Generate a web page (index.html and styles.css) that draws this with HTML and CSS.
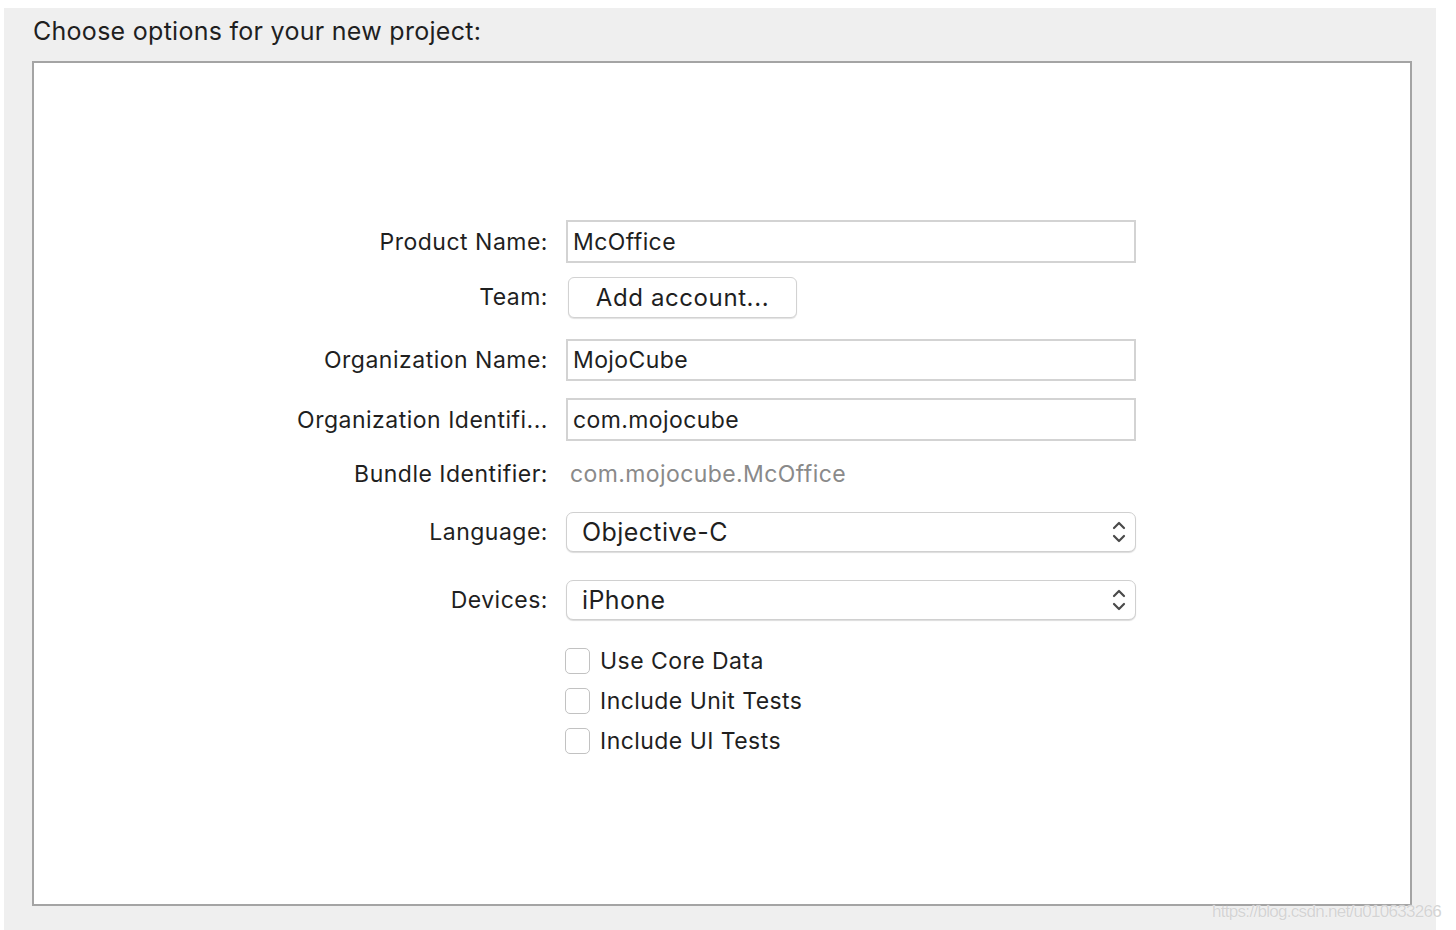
FILE: index.html
```html
<!DOCTYPE html>
<html>
<head>
<meta charset="utf-8">
<link rel="stylesheet" href="styles.css">
</head>
<body>
<div class="panel">
  <div class="title">Choose options for your new project:</div>
  <div class="box">
    <div class="form">
      <div class="row r1">
        <div class="label">Product Name:</div>
        <div class="field">McOffice</div>
      </div>
      <div class="row r2">
        <div class="label">Team:</div>
        <div class="button">Add account...</div>
      </div>
      <div class="row r3">
        <div class="label">Organization Name:</div>
        <div class="field">MojoCube</div>
      </div>
      <div class="row r4">
        <div class="label">Organization Identifi...</div>
        <div class="field">com.mojocube</div>
      </div>
      <div class="row r5">
        <div class="label">Bundle Identifier:</div>
        <div class="static">com.mojocube.McOffice</div>
      </div>
      <div class="row r6">
        <div class="label">Language:</div>
        <div class="popup"><span>Objective-C</span>
          <svg class="chev" width="16" height="26" viewBox="0 0 16 26"><path d="M3 9 L8 4 L13 9" fill="none" stroke="#4a4a4a" stroke-width="2.2" stroke-linecap="round" stroke-linejoin="round"/><path d="M3 17 L8 22 L13 17" fill="none" stroke="#4a4a4a" stroke-width="2.2" stroke-linecap="round" stroke-linejoin="round"/></svg>
        </div>
      </div>
      <div class="row r7">
        <div class="label">Devices:</div>
        <div class="popup"><span>iPhone</span>
          <svg class="chev" width="16" height="26" viewBox="0 0 16 26"><path d="M3 9 L8 4 L13 9" fill="none" stroke="#4a4a4a" stroke-width="2.2" stroke-linecap="round" stroke-linejoin="round"/><path d="M3 17 L8 22 L13 17" fill="none" stroke="#4a4a4a" stroke-width="2.2" stroke-linecap="round" stroke-linejoin="round"/></svg>
        </div>
      </div>
      <div class="row check r8">
        <div class="label"></div>
        <div class="cb"><span class="box-cb"></span><span>Use Core Data</span></div>
      </div>
      <div class="row check r9">
        <div class="label"></div>
        <div class="cb"><span class="box-cb"></span><span>Include Unit Tests</span></div>
      </div>
      <div class="row check r10">
        <div class="label"></div>
        <div class="cb"><span class="box-cb"></span><span>Include UI Tests</span></div>
      </div>
    </div>
  </div>
  <div class="watermark">https://blog.csdn.net/u010633266</div>
</div>
</body>
</html>
```

FILE: styles.css
```css
html, body {
  margin: 0;
  padding: 0;
  background: #ffffff;
}
body {
  font-family: Inter, "Liberation Sans", sans-serif;
  color: #1f1f1f;
  overflow: hidden;
}
.panel {
  position: relative;
  margin: 8px 0 0 4px;
  width: 1432px;
  height: 922px;
  background: #efefef;
  padding-top: 1px;
  box-sizing: border-box;
}
.title {
  margin: 0 0 0 29px;
  height: 52px;
  line-height: 44px;
  font-size: 25px;
  letter-spacing: 0.28px;
  color: #1f1f1f;
}
.box {
  margin-left: 28px;
  width: 1380px;
  height: 845px;
  box-sizing: border-box;
  border: 2px solid #a4a4a4;
  background: #ffffff;
  padding-top: 157px;
}
.form {
  display: flex;
  flex-direction: column;
}
.row {
  display: grid;
  grid-template-columns: 514px 570px;
  column-gap: 18px;
  align-items: center;
}
.label {
  text-align: right;
  font-size: 23px;
  letter-spacing: 0.5px;
  color: #1f1f1f;
}
.r1 { height: 43px; }
.r2 { height: 42px; margin-top: 13px; }
.r3 { height: 42px; margin-top: 21px; }
.r4 { height: 43px; margin-top: 17px; }
.r5 { height: 40px; margin-top: 13px; }
.r6 { height: 40px; margin-top: 18px; }
.r7 { height: 40px; margin-top: 28px; }
.r8 { height: 26px; margin-top: 27px; }
.r9 { height: 26px; margin-top: 14px; }
.r10 { height: 26px; margin-top: 14px; }
.field {
  height: 100%;
  box-sizing: border-box;
  border: 2px solid #d3d3d3;
  padding-left: 5px;
  display: flex;
  align-items: center;
  font-size: 23px;
  letter-spacing: 0.4px;
  color: #1f1f1f;
}
.button {
  justify-self: start;
  margin-left: 2px;
  width: 229px;
  height: 41px;
  box-sizing: border-box;
  border: 1px solid #d2d2d2;
  border-radius: 6px;
  box-shadow: 0 1px 1px rgba(0,0,0,0.12);
  display: flex;
  align-items: center;
  justify-content: center;
  font-size: 24px;
  letter-spacing: 0.6px;
  color: #1f1f1f;
  background: #fff;
}
.static {
  padding-left: 4px;
  font-size: 23px;
  letter-spacing: 0.4px;
  color: #8a8a8a;
}
.popup {
  height: 40px;
  box-sizing: border-box;
  border: 1px solid #d0d0d0;
  border-radius: 7px;
  box-shadow: 0 1px 1px rgba(0,0,0,0.14);
  display: flex;
  align-items: center;
  justify-content: space-between;
  padding: 0 8px 0 15px;
  font-size: 25px;
  letter-spacing: 0.4px;
  color: #1f1f1f;
  background: #fff;
}
.chev {
  display: block;
}
.cb {
  display: flex;
  align-items: center;
  gap: 10px;
  font-size: 23px;
  letter-spacing: 0.45px;
  color: #1f1f1f;
}
.box-cb {
  display: block;
  width: 25px;
  height: 26px;
  box-sizing: border-box;
  border: 1.5px solid #c2c2c2;
  border-radius: 5px;
  background: #fff;
  margin-left: -1px;
}
.watermark {
  position: absolute;
  left: 1208px;
  top: 894px;
  font-family: "Liberation Sans", sans-serif;
  font-size: 17px;
  letter-spacing: -0.7px;
  color: #d4d4d4;
  white-space: nowrap;
  text-shadow: 0 0 1px #ffffff;
}
```
